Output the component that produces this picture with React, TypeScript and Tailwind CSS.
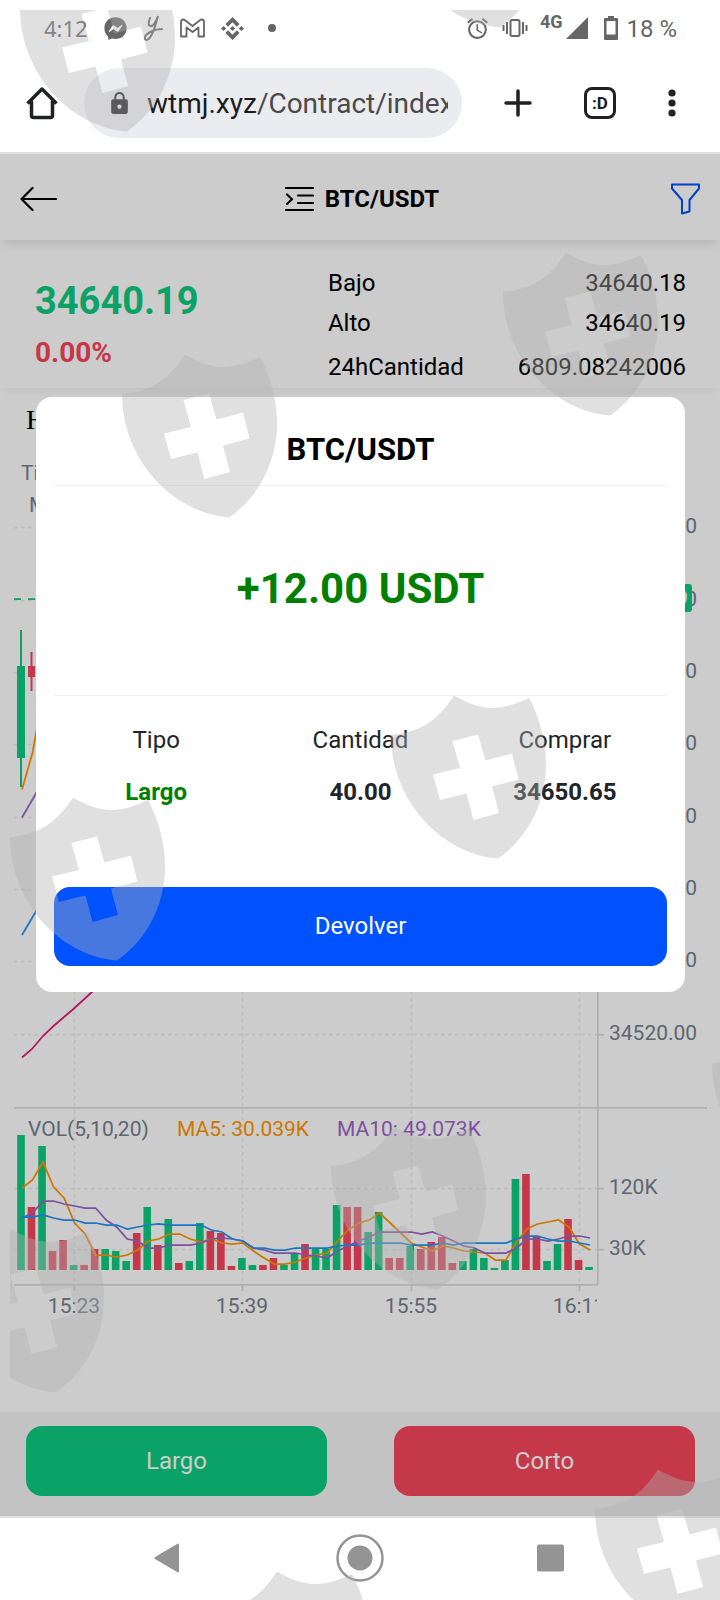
import type { ReactNode } from "react";
import { FaFacebookMessenger } from "react-icons/fa";
import { MdAlarm, MdLock } from "react-icons/md";
import { SiBinance } from "react-icons/si";

const GREEN = "#0ecb81";
const RED = "#f6465d";
const GREY = "#76808f";
const GRID = "#ececec";
const AXIS = "#dddddd";

const VOLUME: [number, "g" | "r"][] = [
  [135, "g"], [63, "r"], [124, "g"], [19, "r"], [30, "r"], [5, "g"], [5, "r"], [21, "r"], [21, "g"], [19, "g"], [9, "g"],
  [37, "r"], [63, "g"], [25, "r"], [51, "g"], [7, "r"], [9, "g"], [47, "g"], [39, "r"], [37, "r"], [4, "r"], [12, "g"],
  [5, "g"], [5, "r"], [12, "r"], [5, "g"], [16, "g"], [26, "r"], [21, "g"], [21, "g"], [65, "g"], [63, "r"], [63, "r"],
  [38, "g"], [58, "g"], [12, "r"], [12, "r"], [24, "g"], [21, "r"], [28, "r"], [33, "r"], [7, "r"], [9, "g"], [21, "g"],
  [12, "g"], [2, "g"], [10, "g"], [91, "g"], [96, "r"], [33, "r"], [9, "g"], [26, "g"], [51, "r"], [10, "r"], [3, "g"],
];

const AVERAGES = [
  {
    color: "#ff9600",
    values: [82, 90, 108, 83, 72, 47, 36, 15, 15, 13, 15, 20, 29, 31, 36, 36, 31, 28, 31, 27, 26, 27, 19, 12, 6, 6, 8, 12, 15, 17, 29, 40, 47, 50, 57, 47, 37, 27, 23, 19, 24, 22, 19, 18, 17, 10, 10, 28, 41, 46, 48, 50, 43, 26, 20],
  },
  {
    color: "#9d65c9",
    values: [52, 57, 69, 69, 66, 64, 62, 62, 50, 43, 31, 29, 22, 22, 25, 25, 25, 27, 31, 32, 31, 29, 22, 20, 17, 17, 17, 15, 14, 12, 19, 24, 29, 33, 38, 38, 38, 38, 36, 38, 34, 29, 24, 22, 17, 17, 17, 22, 31, 31, 29, 31, 34, 34, 32],
  },
  {
    color: "#2196f3",
    values: [53, 53, 55, 52, 50, 50, 47, 47, 45, 45, 41, 43, 45, 46, 45, 45, 45, 45, 40, 38, 31, 29, 22, 22, 20, 20, 22, 22, 22, 22, 24, 25, 25, 27, 27, 27, 27, 25, 25, 25, 27, 25, 27, 27, 27, 27, 27, 31, 34, 34, 31, 29, 29, 27, 25],
  },
];

const PRICE_TICKS = [
  { y: 527, label: "34660.00" },
  { y: 600, label: "34640.00" },
  { y: 672, label: "34620.00" },
  { y: 744, label: "34600.00" },
  { y: 817, label: "34580.00" },
  { y: 889, label: "34560.00" },
  { y: 961, label: "34540.00" },
  { y: 1034, label: "34520.00" },
  { y: 1188, label: "120K" },
  { y: 1249, label: "30K" },
];

const TIME_TICKS = [
  { x: 74, label: "15:23" },
  { x: 242, label: "15:39" },
  { x: 411, label: "15:55" },
  { x: 579, label: "16:11" },
];

const BASE = 1270;
const STEP = 10.52;

function Chart() {
  return (
    <svg viewBox="0 452 720 960" className="block h-auto w-full font-['Roboto',sans-serif] text-[21px]" role="img" aria-label="BTC/USDT">
      <defs>
        <clipPath id="plot">
          <rect x="0" y="452" width="597" height="960" />
        </clipPath>
      </defs>
      <g stroke={GRID} strokeWidth="1.75" strokeDasharray="3.5 3.5">
        {PRICE_TICKS.map((t) => (
          <line key={t.label} x1="14" x2="597" y1={t.y + 0.7} y2={t.y + 0.7} />
        ))}
        {TIME_TICKS.map((t) => (
          <line key={t.label} x1={t.x + 0.5} x2={t.x + 0.5} y1="452" y2="1284" />
        ))}
      </g>
      <g stroke={AXIS} strokeWidth="1.75">
        {PRICE_TICKS.map((t) => (
          <line key={t.label} x1="598" x2="604" y1={t.y + 0.7} y2={t.y + 0.7} />
        ))}
        {TIME_TICKS.map((t) => (
          <line key={t.label} x1={t.x + 0.5} x2={t.x + 0.5} y1="1285" y2="1291" />
        ))}
        <path d="M14 1107.8H707M14 1284.8H598M597.8 452V1284" />
      </g>

      <g fill={GREY}>
        <text x="21" y="480">Tiempo</text>
        <text x="29" y="512">MA</text>
        {PRICE_TICKS.map((t) => (
          <text key={t.label} x="609" y={t.y + 6}>{t.label}</text>
        ))}
        <g textAnchor="middle" clipPath="url(#plot)">
          {TIME_TICKS.map((t) => (
            <text key={t.label} x={t.x} y="1313">{t.label}</text>
          ))}
        </g>
      </g>

      <line x1="14" x2="597" y1="599" y2="599" stroke={GREEN} strokeWidth="1.75" strokeDasharray="7 7" />
      <rect x="598" y="584" width="94" height="28" rx="3" fill={GREEN} />
      <text x="688" y="605" textAnchor="end" fill="#fff">34640.19</text>

      <path d="M21 630V787" stroke={GREEN} strokeWidth="2" />
      <rect x="17" y="666" width="8" height="92" fill={GREEN} />
      <path d="M31.5 652V691" stroke={RED} strokeWidth="2" />
      <rect x="28" y="666" width="7" height="11" fill={RED} />

      <g fill="none" strokeWidth="1.75">
        <path d="M22 789.5L32.5 753L38 722" stroke="#ff9600" />
        <path d="M22 817.5L38 790" stroke="#9d65c9" />
        <path d="M22 935L38 908" stroke="#2196f3" />
        <path d="M22 1057.5L32 1049L43 1036L53 1026.5L64 1017L74 1008.5L92 992L102 982" stroke="#e11d74" />
      </g>

      {VOLUME.map(([h, side], i) => (
        <rect key={i} x={17.2 + i * STEP} y={BASE - h} width="7.6" height={h} fill={side === "g" ? GREEN : RED} />
      ))}
      {AVERAGES.map((line) => (
        <polyline
          key={line.color}
          fill="none"
          stroke={line.color}
          strokeWidth="1.75"
          points={line.values.map((v, i) => `${22 + i * STEP},${BASE - v}`).join(" ")}
        />
      ))}
      <text x="28" y="1136" fill={GREY}>VOL(5,10,20)</text>
      <text x="177" y="1136" fill="#ff9600">MA5: 30.039K</text>
      <text x="337" y="1136" fill="#9d65c9">MA10: 49.073K</text>
    </svg>
  );
}

const SHIELDS = [
  [20, -32], [393, -136], [122, 354], [503, 252], [391, 695], [10, 797],
  [-51, 1229], [331, 1126], [712, 1023], [214, 1571], [595, 1469],
];

function Watermark() {
  return (
    <svg className="pointer-events-none absolute inset-0 z-30 h-full w-full" aria-hidden="true">
      <defs>
        <clipPath id="frame">
          <rect x="10" y="10" width="2000" height="4000" />
        </clipPath>
      </defs>
      <g clipPath="url(#frame)" fill="#b2b2b2" fillOpacity="0.4" fillRule="evenodd">
        {SHIELDS.map(([x, y]) => (
          <path
            key={`${x},${y}`}
            transform={`translate(${x} ${y})`}
            d="M0 40C28 37 45 28 63 .5C76 8 88 13 101 13C115 13 127 8 138 3C149 23 155 47 155 70C155 107 137 143 107 163.5C50 159 0 105 0 40ZM61.5 46L69 73L42 79.500L49 105L75.500 98.500L82.500 125L108 118L101 91.500L127.500 84.500L121 58.500L94.500 65.500L87 39.500Z"
          />
        ))}
      </g>
    </svg>
  );
}

function StatusBar() {
  return (
    <div className="flex h-14 items-center justify-between pr-[43px] pl-[44px] text-[#666]">
      <div className="flex items-center gap-4">
        <span className="font-['Noto_Sans',sans-serif] text-[22px] leading-8">4:12</span>
        <FaFacebookMessenger size={23} />
        <svg width="21" height="28" viewBox="0 0 21 28" fill="none" stroke="currentColor" strokeWidth="2" strokeLinecap="round">
          <path d="M7 4C5 9 5 12 8 12C11 12 13 7 15 2C13 10 11 17 8 22C5 27 1 27 2 23C3 19 12 15 19 15" />
        </svg>
        <svg width="25" height="20" viewBox="0 0 25 20" fill="none" stroke="currentColor" strokeWidth="1.8" strokeLinejoin="round">
          <path d="M1 4Q1 1.500 3.500 1.500Q4.500 1.500 6 3L12.500 8L19 3Q20.500 1.500 21.500 1.500Q24 1.500 24 4V18.500H18.500V9.500L12.500 14L6.500 9.500V18.500H1Z" />
        </svg>
        <SiBinance size={23} />
        <span className="ml-2 size-2 rounded-full bg-[#666]" />
      </div>
      <div className="flex items-center gap-3">
        <MdAlarm size={25} />
        <svg width="26" height="20" viewBox="0 0 26 20" fill="none" stroke="currentColor" strokeWidth="2">
          <rect x="8.500" y="2" width="9" height="16" rx="1.500" />
          <path d="M5 4V16M21 4V16M1.500 7V13M24.500 7V13" />
        </svg>
        <div className="flex items-center gap-1">
          <span className="pb-3 text-[18px] leading-5 font-bold">4G</span>
          <svg width="22" height="22" viewBox="0 0 22 22" fill="currentColor">
            <path d="M22 0V22H0Z" />
          </svg>
        </div>
        <div className="flex items-center gap-2 pl-1">
          <svg width="14" height="24" viewBox="0 0 14 24" fill="currentColor" fillRule="evenodd">
            <path d="M4 0H10V2H13Q14 2 14 3V23Q14 24 13 24H1Q0 24 0 23V3Q0 2 1 2H4ZM2.500 5V18.500H11.500V5Z" />
          </svg>
          <span className="pt-0.5 text-[24px] leading-8">18 %</span>
        </div>
      </div>
    </div>
  );
}

function IconButton({ label, children }: { label: string; children: ReactNode }) {
  return (
    <button type="button" aria-label={label} className="flex shrink-0 items-center justify-center">
      {children}
    </button>
  );
}

function BrowserBar() {
  return (
    <div className="flex items-center gap-[26px] border-b-2 border-[#e0e0e0] pt-3 pr-[44px] pb-[14px] pl-[26px] text-[#202124]">
      <IconButton label="Inicio">
        <svg width="32" height="34" viewBox="0 0 32 34" fill="none" stroke="currentColor" strokeWidth="3.500" strokeLinejoin="round">
          <path d="M1.500 17.500L16 3L30.500 17.500" />
          <path d="M5.500 15V29.500Q5.500 31.500 7.500 31.500H24.500Q26.500 31.500 26.500 29.500V15" />
        </svg>
      </IconButton>
      <div className="flex h-[70px] min-w-0 flex-1 items-center gap-[15px] rounded-full bg-[#ebecf0] pr-[14px] pl-[23px]">
        <MdLock size={25} className="shrink-0 text-[#202124]" />
        <span className="min-w-0 flex-1 overflow-hidden pt-0.5 text-[28px] leading-9 whitespace-nowrap text-[#4a4a4a]">
          <span className="text-[#1c1c1c]">wtmj.xyz</span>/Contract/index
        </span>
      </div>
      <div className="flex items-center justify-between gap-[52px] pl-4">
        <IconButton label="Nueva pestaña">
          <svg width="28" height="28" viewBox="0 0 28 28" stroke="currentColor" strokeWidth="3.500" strokeLinecap="round">
            <path d="M2 14H26M14 2V26" />
          </svg>
        </IconButton>
        <button type="button" className="flex size-8 items-center justify-center rounded-lg border-3 border-current text-[17px] leading-5 font-bold">
          :D
        </button>
        <IconButton label="Más">
          <svg width="8" height="28" viewBox="0 0 8 28" fill="currentColor">
            <circle cx="4" cy="4" r="3.600" />
            <circle cx="4" cy="14" r="3.600" />
            <circle cx="4" cy="24" r="3.600" />
          </svg>
        </IconButton>
      </div>
    </div>
  );
}

function Quote({ label, value }: { label: string; value: string }) {
  return (
    <div className="flex justify-between last:pt-1">
      <dt>{label}</dt>
      <dd>{value}</dd>
    </div>
  );
}

function ResultDialog() {
  return (
    <div className="absolute inset-0 z-20 bg-black/20 pt-[243px] pr-[35px] pl-9">
      <div role="dialog" aria-labelledby="pair" className="rounded-2xl bg-white px-[18px] pt-[18px] pb-[26px]">
        <h2 id="pair" className="border-b border-[#f2f2f2] text-center text-[31px] leading-[70px] font-bold text-black">BTC/USDT</h2>
        <p className="flex h-[210px] items-center justify-center border-b border-[#f2f2f2] pb-1 text-[42px] font-bold text-[#008000]">
          +12.00 USDT
        </p>
        <table className="mt-[18px] w-full table-fixed text-center text-[24px] leading-[52px] text-[#212529]">
          <thead>
            <tr>
              <th className="font-normal">Tipo</th>
              <th className="font-normal">Cantidad</th>
              <th className="font-normal">Comprar</th>
            </tr>
          </thead>
          <tbody className="font-bold">
            <tr>
              <td className="text-[#008000]">Largo</td>
              <td>40.00</td>
              <td>34650.65</td>
            </tr>
          </tbody>
        </table>
        <button type="button" className="mt-[69px] h-[79px] w-full rounded-2xl bg-[#0052ff] pb-0.5 text-[24px] text-white">
          Devolver
        </button>
      </div>
    </div>
  );
}

export default function App() {
  return (
    <div className="relative flex min-h-screen flex-col overflow-hidden bg-white font-['Roboto',sans-serif]">
      <StatusBar />
      <BrowserBar />

      <main className="relative flex flex-1 flex-col bg-white text-black">
        <header className="relative z-10 flex h-[86px] items-center justify-between bg-white px-5 pt-1 shadow-[0_8px_8px_-2px_rgba(0,0,0,0.08)]">
          <IconButton label="Atrás">
            <svg width="37" height="26" viewBox="0 0 37 26" fill="none" stroke="currentColor" strokeWidth="2.200" strokeLinecap="round" strokeLinejoin="round">
              <path d="M12.500 2L1.500 13L12.500 24M1.500 13H36" />
            </svg>
          </IconButton>
          <div className="flex items-center gap-[11px] pr-1">
            <svg width="29" height="26" viewBox="0 0 29 26" fill="none" stroke="currentColor" strokeWidth="2.200" strokeLinecap="round" strokeLinejoin="round">
              <path d="M1 2H28M13 9.500H28M13 17H28M1 24H28M2 8.500L7 13.200L2 18" />
            </svg>
            <h1 className="text-[24px] leading-8 font-bold">BTC/USDT</h1>
          </div>
          <IconButton label="Filtrar">
            <svg width="29" height="32" viewBox="0 0 29 32" fill="none" stroke="#0052ff" strokeWidth="2" strokeLinejoin="round">
              <path d="M1 1.500H28V5.500L18.500 17V28.500L11 30.500V17L1 5.500Z" />
            </svg>
          </IconButton>
        </header>

        <section className="relative grid h-[148px] grid-cols-[9fr_11fr] pt-[22px] pr-[34px] pl-[35px] shadow-[0_4px_8px_-2px_rgba(0,0,0,0.06)]">
          <div className="flex flex-col gap-2 pt-[15px] font-bold">
            <span className="text-[38px] leading-[48px] text-[#0ecb81]">34640.19</span>
            <span className="text-[28px] leading-10 text-[#f6465d]">0.00%</span>
          </div>
          <dl className="pt-px text-[24px] leading-10">
            <Quote label="Bajo" value="34640.18" />
            <Quote label="Alto" value="34640.19" />
            <Quote label="24hCantidad" value="6809.08242006" />
          </dl>
        </section>

        <section className="flex-1">
          <h2 className="px-[26px] font-['Liberation_Serif',serif] text-[28px] leading-[64px]">Hora</h2>
          <Chart />
        </section>

        <div className="flex gap-[67px] bg-[#f4f4f4] pt-[14px] pr-[25px] pb-5 pl-[26px] text-[24px] text-white">
          <button type="button" className="h-[70px] flex-1 rounded-2xl bg-[#0ecb81]">Largo</button>
          <button type="button" className="h-[70px] flex-1 rounded-2xl bg-[#f6465d]">Corto</button>
        </div>

        <ResultDialog />
      </main>

      <nav className="flex h-[84px] items-center justify-between border-t-2 border-[#e0e0e0] px-36 pb-0.5 text-[#949494]">
        <IconButton label="Volver">
          <svg width="48" height="48" viewBox="0 0 48 48" fill="currentColor">
            <path d="M11 23L33.500 9.800Q35 9 35 11V37Q35 39 33.500 38.200L11 25Q9.500 24 11 23Z" />
          </svg>
        </IconButton>
        <IconButton label="Pantalla de inicio">
          <svg width="48" height="48" viewBox="0 0 48 48">
            <circle cx="24" cy="24" r="22.500" fill="none" stroke="currentColor" strokeWidth="2.500" />
            <circle cx="24" cy="24" r="12.500" fill="currentColor" />
          </svg>
        </IconButton>
        <IconButton label="Recientes">
          <svg width="48" height="48" viewBox="0 0 48 48" fill="currentColor">
            <rect x="9" y="10.500" width="27" height="27" rx="2" />
          </svg>
        </IconButton>
      </nav>

      <Watermark />
    </div>
  );
}
